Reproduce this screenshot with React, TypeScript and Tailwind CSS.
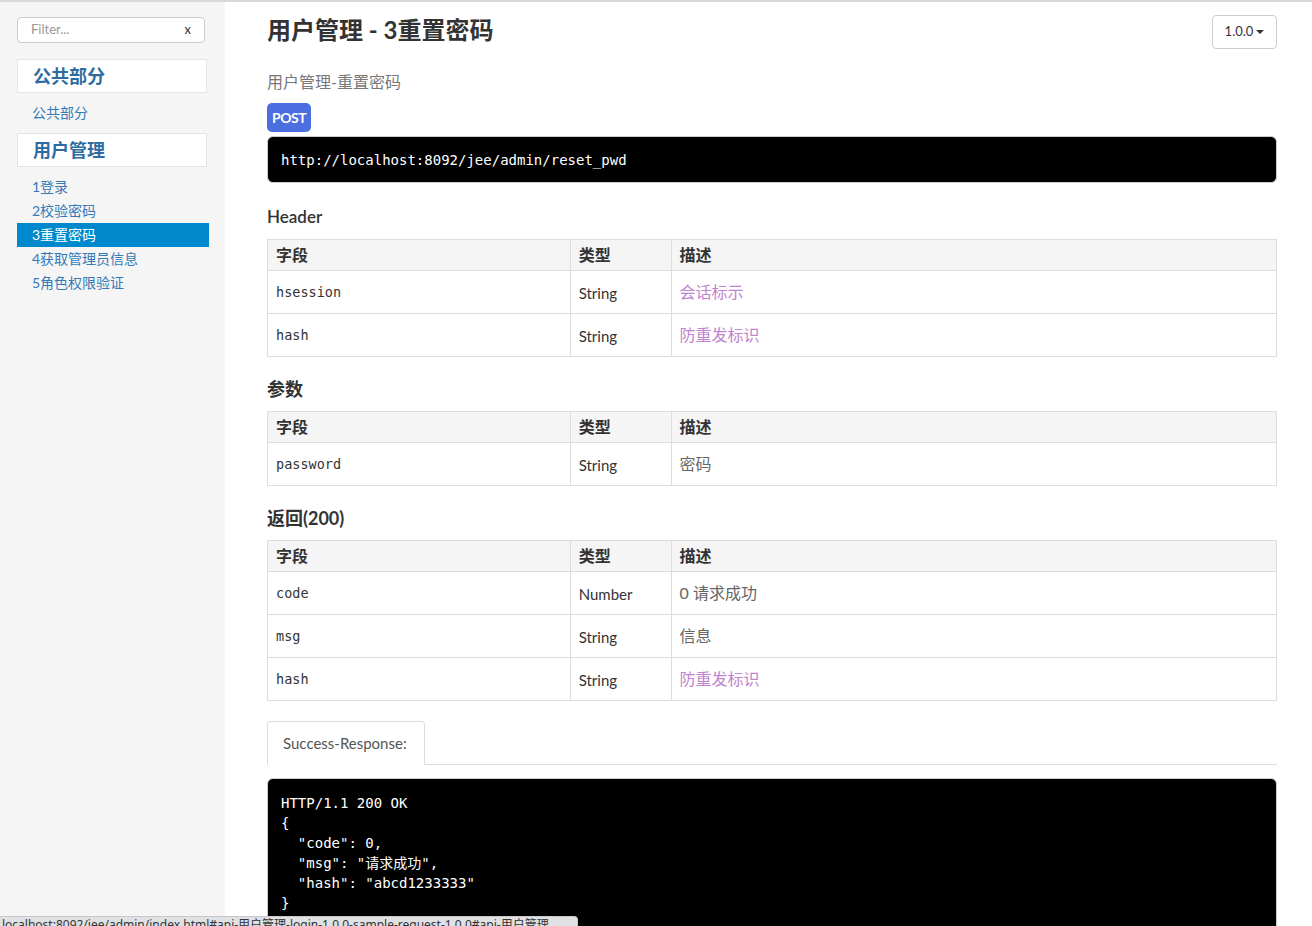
import React from "react";

const sans = { fontFamily: "Lato, 'Noto Sans CJK SC', sans-serif" };
const mono = { fontFamily: "'DejaVu Sans Mono', 'Noto Sans CJK SC', monospace" };

type Row = { f: string; t: string; d: string; link?: boolean };

function Table({ rows }: { rows: Row[] }) {
  return (
    <table className="w-full border-collapse text-[15px]">
      <thead>
        <tr className="bg-[#f5f5f5] h-[31px]">
          <th className="border border-[#dddddd] text-left text-[16px] font-bold px-2 w-[30%] text-[#333]">字段</th>
          <th className="border border-[#dddddd] text-left text-[16px] font-bold px-2 w-[10%] text-[#333]">类型</th>
          <th className="border border-[#dddddd] text-left text-[16px] font-bold px-2 text-[#333]">描述</th>
        </tr>
      </thead>
      <tbody>
        {rows.map((r, i) => (
          <tr key={i} className="h-[43px]">
            <td className="border border-[#dddddd] px-2 align-top pt-[11px] text-[13.5px] text-[#333]" style={mono}>{r.f}</td>
            <td className="border border-[#dddddd] px-2 align-top pt-[11px] text-[#333]">{r.t}</td>
            <td className={"border border-[#dddddd] px-2 align-top pt-[9px] text-[16px] " + (r.link ? "text-[#bf84cf]" : "text-[#666]")}>{r.d}</td>
          </tr>
        ))}
      </tbody>
    </table>
  );
}

export default function App() {
  return (
    <div className="relative h-[926px] overflow-hidden border-t-2 border-[#d9d9d9] bg-white text-[#333]" style={sans}>
      <div className="flex h-full">
        <aside className="w-[225px] shrink-0 bg-[#f5f5f5] pl-[17px] pr-[16px] pt-[15px]">
          <div className="flex h-[26px] w-[188px] items-center justify-between rounded-[4px] border border-[#cccccc] bg-white pl-[13px] pr-[13px] text-[13px]">
            <span className="text-[#999]">Filter...</span>
            <span className="text-[#333]">x</span>
          </div>
          <div className="mt-[16px] flex h-[34px] w-[190px] items-center border border-[#e5e5e5] bg-white pl-[15px] text-[18px] font-bold text-[#2d6ca2]">公共部分</div>
          <div className="mt-[8px] pl-[15px] text-[14px] leading-[24px] text-[#337ab7]">公共部分</div>
          <div className="mt-[8px] flex h-[34px] w-[190px] items-center border border-[#e5e5e5] bg-white pl-[15px] text-[18px] font-bold text-[#2d6ca2]">用户管理</div>
          <div className="mt-[8px] text-[14px] leading-[24px]">
            <div className="pl-[15px] text-[#337ab7]">1登录</div>
            <div className="pl-[15px] text-[#337ab7]">2校验密码</div>
            <div className="w-[192px] bg-[#0088cc] pl-[15px] text-white">3重置密码</div>
            <div className="pl-[15px] text-[#337ab7]">4获取管理员信息</div>
            <div className="pl-[15px] text-[#337ab7]">5角色权限验证</div>
          </div>
        </aside>
        <main className="flex-1 pl-[42px] pr-[35px]">
          <div className="flex items-start justify-between pt-[10px]">
            <h1 className="text-[24px] font-bold leading-[36px] text-[#333]">用户管理 - 3重置密码</h1>
            <div className="mt-[3px] flex h-[34px] w-[65px] items-center justify-center gap-[3px] rounded-[4px] border border-[#cccccc] text-[13px] text-[#333]">
              1.0.0
              <span className="inline-block border-x-[4px] border-t-[4px] border-x-transparent border-t-[#333]" />
            </div>
          </div>
          <p className="mt-[21px] text-[16px] leading-[24px] text-[#777]">用户管理-重置密码</p>
          <div className="mt-[9px] inline-flex h-[29px] w-[44px] items-center justify-center rounded-[5px] bg-[#4b6fe0] text-[14px] font-bold tracking-[-0.5px] text-white">POST</div>
          <pre className="mt-[4px] h-[47px] rounded-[6px] border border-[#ccc] bg-black pl-[13px] pt-[13px] text-[14px] leading-[20px] text-white" style={mono}>http://localhost:8092/jee/admin/reset_pwd</pre>

          <h2 className="mt-[22px] text-[17px] font-semibold leading-[24px]">Header</h2>
          <div className="mt-[10px]">
            <Table rows={[
              { f: "hsession", t: "String", d: "会话标示", link: true },
              { f: "hash", t: "String", d: "防重发标识", link: true },
            ]} />
          </div>

          <h2 className="mt-[20px] text-[18px] font-bold leading-[24px]">参数</h2>
          <div className="mt-[10px]">
            <Table rows={[{ f: "password", t: "String", d: "密码" }]} />
          </div>

          <h2 className="mt-[20px] text-[18px] font-bold leading-[24px]">返回(200)</h2>
          <div className="mt-[10px]">
            <Table rows={[
              { f: "code", t: "Number", d: "0 请求成功" },
              { f: "msg", t: "String", d: "信息" },
              { f: "hash", t: "String", d: "防重发标识", link: true },
            ]} />
          </div>

          <div className="mt-[20px] flex border-b border-[#dddddd]">
            <div className="-mb-px flex h-[44px] w-[158px] items-center rounded-t-[4px] border border-[#dddddd] border-b-white bg-white px-[15px] text-[15px] text-[#555]">Success-Response:</div>
          </div>
          <pre className="mt-[13px] h-[200px] rounded-[6px] border border-[#ccc] bg-black pl-[13px] pt-[14px] text-[14px] leading-[20px] text-white" style={mono}>{`HTTP/1.1 200 OK
{
  "code": 0,
  "msg": "请求成功",
  "hash": "abcd1233333"
}`}</pre>
        </main>
      </div>
      <div className="absolute bottom-0 left-0 h-[10px] w-[578px] overflow-hidden rounded-tr-[4px] border-t border-r border-[#c8c8c8] bg-[#dfe1e5]">
        <div className="whitespace-nowrap pl-[2px] text-[12px] leading-[16px] text-[#333]" style={{ fontFamily: "'Noto Sans', 'Noto Sans CJK SC', sans-serif" }}>
          localhost:8092/jee/admin/index.html#api-用户管理-login-1.0.0-sample-request-1.0.0#api-用户管理
        </div>
      </div>
    </div>
  );
}
